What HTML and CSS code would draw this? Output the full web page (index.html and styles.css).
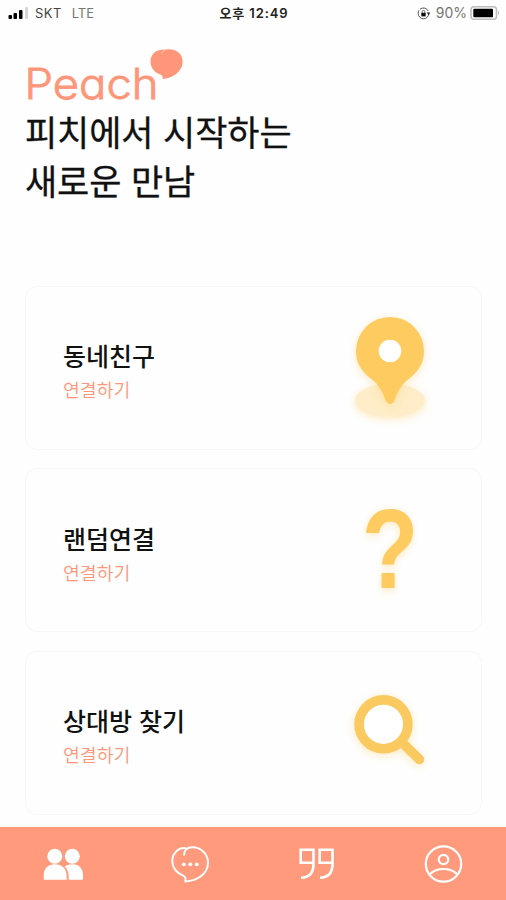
FILE: index.html
```html
<!DOCTYPE html>
<html lang="ko">
<head>
    <meta charset="UTF-8">
    <meta name="viewport" content="width=device-width, initial-scale=1.0">
    <title>Peach</title>
    <link rel="stylesheet" href="styles.css">
</head>
<body>
    <div class="app">
        <header class="status-bar">
            <div class="status-left">
                <svg class="signal" width="21" height="12" viewBox="0 0 21 12">
                    <rect x="0.5" y="8" width="3.5" height="4" rx="1"/>
                    <rect x="5.5" y="6" width="3.5" height="6" rx="1"/>
                    <rect x="11" y="3" width="3.5" height="9" rx="1"/>
                    <rect class="signal-off" x="17" y="0" width="3" height="12" rx="1"/>
                </svg>
                <span class="carrier">SKT</span>
                <span class="network">LTE</span>
            </div>
            <div class="status-time">오후 12:49</div>
            <div class="status-right">
                <svg width="13" height="13" viewBox="0 0 13 13">
                    <path d="M3 2.2A5.3 5.3 0 0 1 11.2 4M11.8 6.5A5.3 5.3 0 1 1 1.2 6.5Q1.2 4.5 2 3.3" fill="none" stroke="#555" stroke-width="1"/>
                    <path d="M9.7 5.5h3.3l-1.2 2.7z" fill="#222"/>
                    <rect x="4.3" y="5.8" width="4.4" height="3.6" fill="#111"/>
                    <path d="M5.2 6V4.7a1.3 1.3 0 0 1 2.6 0V6" fill="none" stroke="#333" stroke-width="0.7"/>
                </svg>
                <span class="battery-text">90%</span>
                <svg width="30" height="14" viewBox="0 0 30 14">
                    <rect x="1" y="0.8" width="25.5" height="12.4" rx="3" fill="#fff" stroke="#bdbdbd" stroke-width="1.6"/>
                    <rect x="3.3" y="2.8" width="19.7" height="8.4" rx="1" fill="#000"/>
                    <path d="M28 4.6q2 2.2 0 4.6z" fill="#bdbdbd"/>
                </svg>
            </div>
        </header>

        <main class="content">
            <svg class="logo" width="160" height="56" viewBox="0 0 160 56">
                <text class="logo-text" x="-0.5" y="50.5" textLength="134" lengthAdjust="spacingAndGlyphs">Peach</text>
                <path d="M136 1.7C130 2.5 125.5 7 125.500 13.500C125.500 20 130 24.800 135.500 26.600C137.500 27.300 138 29 137.600 31C147 30.400 157.600 24 157.600 13.500C157.600 5 150 1 144 1.3Q139.500 1.300 136 1.700Z" fill="#ff9679"/>
                <path d="M140.500 2Q137.700 2.800 136.300 5.600" fill="none" stroke="#ffcfa8" stroke-width="0.9"/>
            </svg>
            <h1 class="headline">피치에서 시작하는<br>새로운 만남</h1>

            <div class="card-list">
                <section class="card">
                    <div class="card-text">
                        <h2>동네친구</h2>
                        <p>연결하기</p>
                    </div>
                    <svg class="card-icon" width="110" height="130" viewBox="0 0 110 130">
                        <ellipse class="glow" cx="55" cy="97.5" rx="35" ry="16.5" fill="#feedc8"/>
                        <path class="glow" d="M55 14a34 34 0 0 1 34 34c0 14-7.5 22-16 28.5c-7 5.5-10.5 12-13.5 20.5q-1.5 4-4.5 4t-4.5-4c-3-8.5-6.5-15-13.5-20.5c-8.5-6.5-16-14.5-16-28.5a34 34 0 0 1 34-34z" fill="#fdcb5f"/>
                        <circle cx="55" cy="48" r="11.3" fill="#fff"/>
                    </svg>
                </section>

                <section class="card">
                    <div class="card-text">
                        <h2>랜덤연결</h2>
                        <p>연결하기</p>
                    </div>
                    <svg class="card-icon" width="110" height="130" viewBox="0 0 110 130">
                        <text class="question glow" transform="translate(55 103) scale(0.82 1)" text-anchor="middle">?</text>
                    </svg>
                </section>

                <section class="card">
                    <div class="card-text">
                        <h2>상대방 찾기</h2>
                        <p>연결하기</p>
                    </div>
                    <svg class="card-icon" width="110" height="130" viewBox="0 0 110 130">
                        <g class="glow" fill="none" stroke="#fac95f">
                            <circle cx="48.5" cy="56.3" r="24.3" stroke-width="9.8"/>
                            <path d="M66 73.5L84.5 91.5" stroke-width="9.5" stroke-linecap="round"/>
                        </g>
                        <circle cx="48.5" cy="56.3" r="19.5" fill="#fff"/>
                    </svg>
                </section>
            </div>
        </main>

        <nav class="tab-bar">
            <a class="tab">
                <svg width="40" height="40" viewBox="0 0 40 40" fill="#fff">
                    <circle cx="29.3" cy="12.3" r="7.5"/>
                    <path d="M24 21.2q2.5-.9 5.5-.9c7 0 10.500 4.700 10.500 10.500v5h-14.300v-3q0-7.500-4.200-10.300z"/>
                    <circle cx="11.8" cy="12.3" r="7.5"/>
                    <path d="M.8 35.8v-5c0-6.3 4-10.5 11.2-10.5s11.700 4.700 11.700 12.500v3z"/>
                </svg>
            </a>
            <a class="tab">
                <svg width="40" height="40" viewBox="0 0 40 40" fill="none" stroke="#fff" stroke-width="2" stroke-linejoin="round">
                    <path d="M16 4.2C7.5 3.2 2 10.5 2.3 17.5C2.6 25 8 29.5 13.5 31.8Q16.3 33 15.3 37.5C27.5 36.5 38 30 38 18.5C38 10 31 3.3 22.5 3.3Q14 3.2 14 11.5"/>
                    <g fill="#fff" stroke="none">
                        <circle cx="13.8" cy="20.3" r="1.9"/>
                        <circle cx="20.3" cy="20.3" r="1.9"/>
                        <circle cx="26.8" cy="20.3" r="1.9"/>
                    </g>
                </svg>
            </a>
            <a class="tab">
                <svg width="40" height="40" viewBox="0 0 40 40" fill="none" stroke="#fff" stroke-width="2.6">
                    <path d="M17.5 18.7H4.7V5.8H17.5V20Q17.5 33.400 5 33.800"/>
                    <path d="M36.500 18.700H23.700V5.800H36.500V20Q36.500 33.400 24 33.800"/>
                </svg>
            </a>
            <a class="tab">
                <svg width="40" height="40" viewBox="0 0 40 40" fill="none" stroke="#fff" stroke-width="2.2">
                    <circle cx="20.5" cy="20" r="17.7"/>
                    <circle cx="20.5" cy="15.5" r="4.7"/>
                    <path d="M7 30Q12 25 20.5 25T34 30"/>
                </svg>
            </a>
        </nav>
    </div>
</body>
</html>
```
FILE: styles.css
```css
* {
    box-sizing: border-box;
    margin: 0;
    padding: 0;
}

body {
    font-family: "Noto Sans CJK KR", sans-serif;
    background-color: #fefefe;
    color: #111;
}

svg {
    display: block;
    flex-shrink: 0;
}

.app {
    display: flex;
    flex-direction: column;
    width: 506px;
    height: 900px;
    overflow: hidden;
}

/* status bar */
.status-bar {
    display: grid;
    grid-template-columns: 1fr auto 1fr;
    align-items: center;
    height: 26px;
    padding: 0 6px 0 8px;
    font-family: Inter, "Noto Sans CJK KR", sans-serif;
    font-size: 13px;
    line-height: 26px;
    color: #444;
}

.status-left,
.status-right {
    display: flex;
    align-items: center;
}

.status-right {
    justify-content: flex-end;
}

.signal-off {
    fill: #d5d5d5;
}

.carrier {
    margin-left: 6px;
    letter-spacing: 0.4px;
}

.network {
    margin-left: 10px;
    color: #777;
}

.status-time {
    font-weight: 600;
    letter-spacing: 0.9px;
    color: #222;
}

.battery-text {
    margin: 0 3px 0 6px;
    color: #777;
    font-size: 14px;
}

/* content */
.content {
    flex: 1;
    padding: 22px 23px 0 25px;
}

.logo {
    overflow: visible;
}

/* cv11 is the single-storey a */
.logo-text {
    font-family: Inter, sans-serif;
    font-size: 42px;
    font-weight: 300;
    font-feature-settings: "cv11";
    fill: #ff9679;
    stroke: #ff9679;
    stroke-width: 0.8px;
}

.headline {
    margin-top: 3px;
    font-size: 35px;
    font-weight: 400;
    line-height: 48.5px;
    letter-spacing: -0.1px;
    -webkit-text-stroke: 0.3px #111;
}

.card-list {
    display: flex;
    flex-direction: column;
    gap: 18.5px;
    margin-top: 81.6px;
}

.card {
    display: flex;
    justify-content: space-between;
    align-items: center;
    width: 457px;
    height: 164px;
    padding: 0 36px 0 37px;
    background: #fefefe;
    border: 1.5px solid #f7f7f7;
    border-radius: 12px;
}

.card h2 {
    font-size: 25px;
    font-weight: 500;
    line-height: 36px;
}

.card p {
    font-size: 18.3px;
    font-weight: 350;
    line-height: 32px;
    color: #ff9679;
}

.card-text {
    padding-top: 7px;
}

.glow {
    filter: drop-shadow(0 2px 4px rgba(253, 203, 95, 0.4));
}

.question {
    font-family: "Liberation Sans", sans-serif;
    font-size: 113px;
    font-weight: 700;
    fill: #fdcb5f;
}

/* bottom tabs */
.tab-bar {
    display: grid;
    grid-template-columns: repeat(4, 1fr);
    height: 73px;
    background: #ff9a7d;
}

.tab {
    display: flex;
    justify-content: center;
    align-items: center;
}
```
